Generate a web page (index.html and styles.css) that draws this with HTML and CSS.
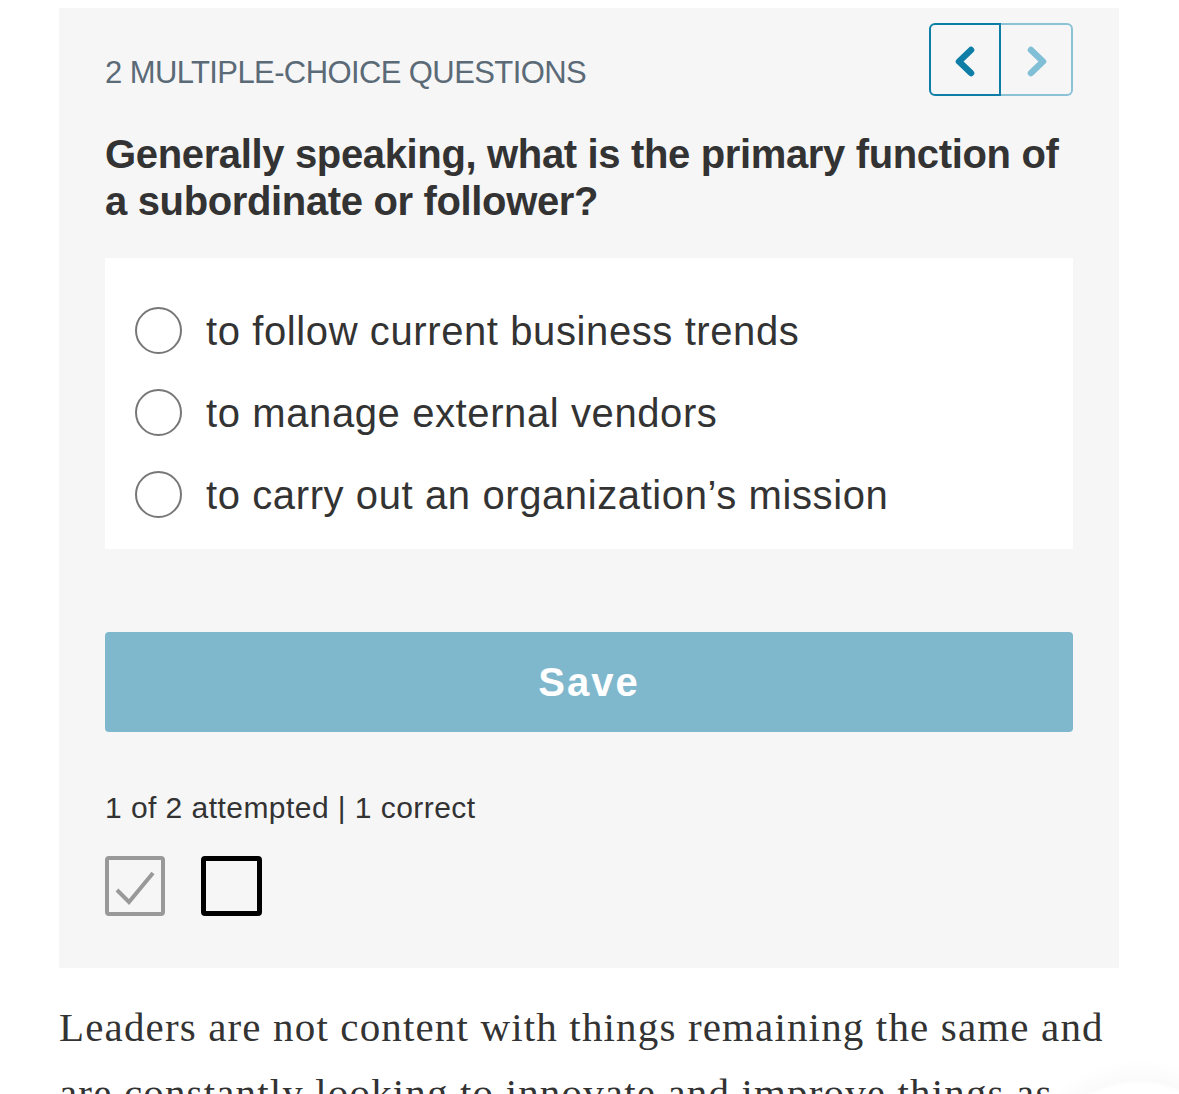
FILE: index.html
```html
<!DOCTYPE html>
<html>
<head>
<meta charset="utf-8">
<link rel="stylesheet" href="styles.css">
</head>
<body>
<div class="page">
  <section class="quiz">
    <div class="quiz-head">
      <div class="quiz-title">2 MULTIPLE-CHOICE QUESTIONS</div>
      <div class="nav">
        <button class="nav-btn prev" aria-label="Previous">
          <svg width="68" height="69" viewBox="2 2 68 69"><path d="M42 27 L30 38.5 L42 50" fill="none" stroke="#0f7ea6" stroke-width="6.5" stroke-linecap="round" stroke-linejoin="round"/></svg>
        </button>
        <button class="nav-btn next" aria-label="Next">
          <svg width="70" height="69" viewBox="0 2 70 69"><path d="M30 27 L42 38.5 L30 50" fill="none" stroke="#80bfd6" stroke-width="6.5" stroke-linecap="round" stroke-linejoin="round"/></svg>
        </button>
      </div>
    </div>
    <h2 class="question">Generally speaking, what is the primary function of a subordinate or follower?</h2>
    <div class="options">
      <label class="option"><span class="radio"></span><span>to follow current business trends</span></label>
      <label class="option"><span class="radio"></span><span>to manage external vendors</span></label>
      <label class="option"><span class="radio"></span><span>to carry out an organization’s mission</span></label>
    </div>
    <button class="save">Save</button>
    <div class="status">1 of 2 attempted | 1 correct</div>
    <div class="progress">
      <span class="box done">
        <svg width="52" height="52" viewBox="0 0 52 52"><path d="M8 30 L20 42 L44 13" fill="none" stroke="#999" stroke-width="4"/></svg>
      </span>
      <span class="box current"></span>
    </div>
  </section>
  <p class="body-text">Leaders are not content with things remaining the same and are constantly looking to innovate and improve things as</p>
</div>
<div class="fab-shadow"></div>
</body>
</html>
```
FILE: styles.css
```css
* { box-sizing: border-box; }
html, body { margin: 0; padding: 0; background: #fff; }
body { width: 1179px; height: 1094px; overflow: hidden; position: relative; }
.page { padding: 8px 60px 0 59px; }
.quiz {
  background: #f6f6f6;
  padding: 15px 46px 52px 46px;
  font-family: "Liberation Sans", Arial, sans-serif;
}
.quiz-head { display: flex; justify-content: space-between; align-items: flex-start; }
.quiz-title {
  font-size: 31px; line-height: 36px; color: #5b6a77; letter-spacing: -0.6px;
  margin-top: 32px;
}
.nav { display: flex; }
.nav-btn {
  height: 73px; background: transparent; padding: 0; margin: 0;
  display: flex; align-items: center; justify-content: center;
}
.nav-btn svg { display: block; }
.nav-btn.prev { width: 72px; border: 2px solid #0f7ea6; border-radius: 6px 0 0 6px; }
.nav-btn.next { width: 72px; border: 2px solid #8cc2d6; border-left: none; border-radius: 0 6px 6px 0; }
.question {
  font-size: 40px; font-weight: bold; color: #333; line-height: 47px;
  margin: 35px 0 0 0; letter-spacing: -0.35px;
}
.options {
  background: #fff; margin-top: 33px; padding: 49px 30px 31px 30px;
  display: flex; flex-direction: column; gap: 35px;
}
.option {
  display: flex; align-items: center; font-size: 40px; color: #333;
  line-height: 46px; gap: 24px; letter-spacing: 0.6px;
}
.radio { width: 47px; height: 47px; border: 2px solid #777; border-radius: 50%; flex: none; }
.save {
  display: block; width: 100%; height: 100px; margin-top: 83px;
  background: #7fb8cd; border: none; border-radius: 4px; color: #fff;
  font-family: "Liberation Sans", Arial, sans-serif; font-weight: bold; font-size: 40px;
  letter-spacing: 2px; padding: 0;
}
.status { font-size: 30px; line-height: 36px; color: #333; margin-top: 58px; letter-spacing: 0.45px; }
.progress { display: flex; gap: 36px; margin-top: 30px; }
.box { width: 60px; height: 60px; border-radius: 4px; display: flex; align-items: center; justify-content: center; }
.box.done { border: 4px solid #999; }
.box.current { width: 61px; border: 5px solid #000; }
.body-text {
  font-family: "Liberation Serif", "Times New Roman", serif; font-size: 41px; color: #333;
  line-height: 66px; margin: 26px 0 0 0; letter-spacing: 1.15px;
}
.fab-shadow {
  position: absolute; right: 0; bottom: 0; width: 170px; height: 60px;
  background: radial-gradient(circle at 130px 150px, rgba(0,0,0,0) 100px, rgba(0,0,0,0.018) 104px, rgba(0,0,0,0) 125px);
  pointer-events: none;
}
```
